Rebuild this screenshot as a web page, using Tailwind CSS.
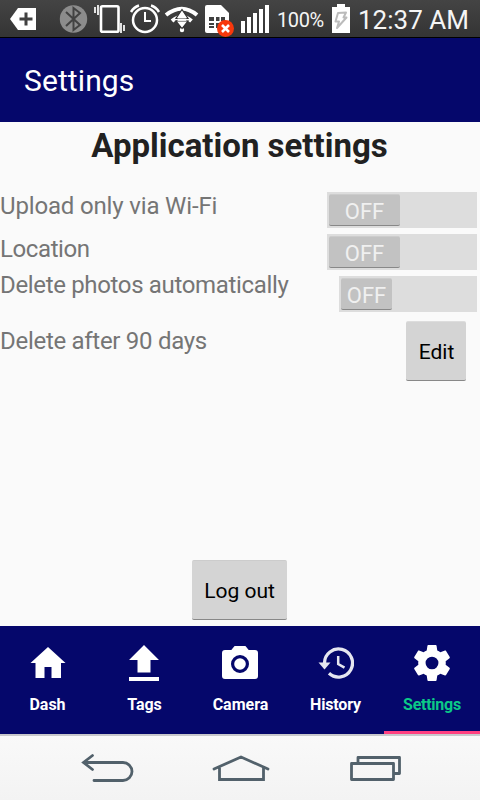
<!DOCTYPE html>
<html lang="en">
<head>
<meta charset="utf-8">
<title>Settings</title>
<script src="https://cdn.jsdelivr.net/npm/@tailwindcss/browser@4"></script>
</head>
<body class="w-[480px] h-[800px] overflow-hidden bg-[#fafafa] font-['Roboto',sans-serif] flex flex-col whitespace-nowrap">
<div class="h-[38px] shrink-0 bg-linear-to-b from-[#444] to-[#343434] border-b border-black flex text-[#f5f5f5]">
<svg class="w-[272px] h-[37px] shrink-0" viewBox="0 0 272 37" fill="none">
<path d="M10 19L18 8H36V30H18Z" fill="#fff"/><path d="M19.500 19H32.500M26 12.500V25.500" stroke="#414141" stroke-width="3"/>
<circle cx="73.500" cy="19" r="13.700" fill="#8c8c8c"/><path d="M66 12L80 25L73.500 30V8L80 13L66 26" stroke="#424242" stroke-width="2"/>
<rect x="101" y="6.200" width="17.500" height="25.500" rx="1.500" stroke="#fff" stroke-width="2.600"/><path d="M95 7V13M98 5V15M121 23V33M124 25V31" stroke="#fff" stroke-width="1.700"/>
<circle cx="145" cy="20" r="12" stroke="#fff" stroke-width="2.500"/><path d="M145 12V21H151" stroke="#fff" stroke-width="2"/><path d="M131 12Q134 7 139 5.500M159 12Q156 7 151 5.500" stroke="#fff" stroke-width="2.500"/>
<path d="M166 15Q182 2.500 197 15M172 21Q182 12.500 191.500 21" stroke="#fff" stroke-width="4"/><circle cx="182" cy="30" r="2.200" fill="#fff"/><path d="M182 9.500L188 18.500H176ZM182 28.500L176 21H188Z" fill="#fff" stroke="#333" stroke-width="1.200"/><path d="M177.500 19.700H186.500" stroke="#fff" stroke-width="2.400"/>
<path d="M207 5H221L229 13V31Q229 33 227 33H207Q205 33 205 31V7Q205 5 207 5Z" fill="#fff"/><path d="M209 17H214V21H209ZM216 17H219.500V21H216ZM221 17H225V21H221ZM209 23H214V25H209ZM209 26H214V28H209ZM216 23H225V28H216Z" fill="#414141"/><circle cx="225.500" cy="28.500" r="8.500" fill="#f8380c"/><path d="M222 25L229 32M229 25L222 32" stroke="#fff" stroke-width="2.600"/>
<path d="M241 21H245V33H241ZM247 17H251V33H247ZM253 13H257V33H253ZM259 9H263V33H259ZM265 5H269V33H265Z" fill="#fff"/>
</svg>
<span class="w-[59px] pl-[5px] pt-[8px] text-[20px] leading-6 tracking-[-0.4px]">100%</span>
<svg class="w-[20px] h-[37px] shrink-0" viewBox="0 0 20 37"><path d="M6 4H14V7H19V33H1V7H6Z" fill="#fff"/><path d="M7 13L15 12.500L12.500 17.500H15.500L6 28L8 21.500H4.500Z" fill="none" stroke="#bbb" stroke-width="2" stroke-linejoin="round"/></svg>
<span class="pl-[7px] pt-[4px] text-[26px] leading-8">12:37 AM</span>
</div>
<header class="h-[84px] shrink-0 bg-[#05076b] pl-6 pt-[2px] flex items-center text-white text-[30px] leading-9 tracking-[0.1px]">Settings</header>
<main class="h-[504px] shrink-0 flex flex-col text-[24px] leading-7 text-[#757575]">
<h1 class="h-[70px] pt-[4px] pr-px text-center text-[33px] leading-[40px] font-bold text-[#212121]">Application settings</h1>
<div class="h-[42px] flex justify-between pr-[3px]"><span class="tracking-[-0.16px]">Upload only via Wi-Fi</span>
<div class="w-[150px] h-9 bg-[#ddd] pl-[2px] pt-[2px]"><div class="w-[71px] h-[32px] rounded-[2px] bg-[#c2c2c2] border-t border-b border-t-[#ccc] border-b-[#888] text-[#f0f0f0] text-[22px] leading-[34px] text-center">OFF</div></div></div>
<div class="h-[42px] flex justify-between pr-[3px]"><span class="pt-px tracking-[-0.4px]">Location</span>
<div class="w-[150px] h-9 bg-[#ddd] pl-[2px] pt-[2px]"><div class="w-[71px] h-[32px] rounded-[2px] bg-[#c2c2c2] border-t border-b border-t-[#ccc] border-b-[#888] text-[#f0f0f0] text-[22px] leading-[34px] text-center">OFF</div></div></div>
<div class="h-[45px] flex justify-between pr-[3px]"><span class="-mt-[5px] tracking-[-0.34px]">Delete photos automatically</span>
<div class="w-[138px] h-9 bg-[#ddd] pl-[2px] pt-[2px]"><div class="w-[51px] h-[32px] rounded-[2px] bg-[#c2c2c2] border-t border-b border-t-[#ccc] border-b-[#888] text-[#f0f0f0] text-[22px] leading-[34px] text-center">OFF</div></div></div>
<div class="flex justify-between pr-[14px]"><span class="pt-[6px] tracking-[-0.29px]">Delete after 90 days</span>
<button class="w-[60px] h-[60px] pt-[2px] pl-px rounded-[2px] bg-[#d4d4d4] border-t border-b border-t-[#ddd] border-b-[#888] text-black text-[21px]">Edit</button></div>
<button class="mt-auto mb-[6px] ml-[192px] w-[95px] h-[60px] pt-[2px] rounded-[2px] bg-[#d4d4d4] border-t border-b border-t-[#ccc] border-b-[#888] text-black text-[21px]">Log out</button>
</main>
<nav class="h-[108px] shrink-0 bg-[#05076b] grid grid-cols-5 text-white text-[16px] leading-5 font-bold text-center">
<div class="flex flex-col items-center pt-[19px]"><svg class="w-9 h-9" viewBox="0 0 36 36" fill="#fff"><path d="M18 2L35.500 18H31V33H21.500V22H14.500V33H5.500V18H.5Z"/></svg><span class="mt-[14px] -ml-px">Dash</span></div>
<div class="flex flex-col items-center pt-[19px]"><svg class="w-9 h-9" viewBox="0 0 36 36" fill="#fff"><path d="M18 0L33 15H24.500V27.500H11.500V15H3ZM3 32H33V36H3Z"/></svg><span class="mt-[14px] ml-px">Tags</span></div>
<div class="flex flex-col items-center pt-[19px]"><svg class="w-9 h-9" viewBox="0 0 36 36" fill="#fff"><path fill-rule="evenodd" d="M12.600 1H23.400L26.700 5H33Q36 5 36 8V31Q36 34 33 34H3Q0 34 0 31V8Q0 5 3 5H9.300ZM18 10A9 9 0 1 0 18 28A9 9 0 1 0 18 10Z"/><circle cx="18" cy="19" r="5.800"/></svg><span class="mt-[14px] ml-px">Camera</span></div>
<div class="flex flex-col items-center pt-[19px]"><svg class="w-9 h-9" viewBox="0 0 36 36" fill="none" stroke="#e6e6f0"><path d="M6.500 18A14 14 0 1 1 11 28.300" stroke-width="3.300"/><path d="M.5 17.500H12.500L6.500 24.500Z" fill="#e6e6f0" stroke="none"/><path d="M20.200 11V19L26.500 22.700" stroke-width="2.500"/></svg><span class="mt-[14px] -ml-px tracking-[-0.15px]">History</span></div>
<div class="flex flex-col items-center pt-[19px] border-b-[3px] border-[#ff4081]"><svg class="w-[36px] h-9" viewBox="2.200 2 19.600 20" preserveAspectRatio="none" fill="#fff"><path d="M19.430 12.980c.04-.32.07-.64.07-.98s-.03-.66-.07-.98l2.110-1.650c.19-.15.24-.42.12-.64l-2-3.460c-.12-.22-.39-.3-.61-.22l-2.490 1c-.52-.4-1.080-.73-1.690-.98l-.38-2.650C14.460 2.180 14.250 2 14 2h-4c-.25 0-.46.18-.49.42l-.38 2.650c-.61.25-1.170.59-1.690.98l-2.490-1c-.23-.09-.49 0-.61.22l-2 3.460c-.13.22-.07.49.12.64l2.110 1.650c-.04.32-.07.65-.07.98s.03.66.07.98l-2.110 1.650c-.19.15-.24.42-.12.64l2 3.460c.12.22.39.3.61.22l2.490-1c.52.4 1.080.73 1.690.98l.38 2.650c.03.24.24.42.49.42h4c.25 0 .46-.18.49-.42l.38-2.650c.61-.25 1.170-.59 1.690-.98l2.490 1c.23.09.49 0 .61-.22l2-3.460c.12-.22.07-.49-.12-.64zM12 15.500a3.500 3.500 0 1 1 0-7 3.500 3.500 0 0 1 0 7"/></svg><span class="mt-[14px] tracking-[-0.25px] text-[#0bc987]">Settings</span></div>
</nav>
<footer class="h-[66px] shrink-0 border-t-2 border-[#c8c8cc] bg-linear-to-b from-[#f9f9f9] to-[#f3f3f3]">
<svg class="w-[480px] h-16" viewBox="0 736 480 64" fill="none" stroke="#52616b" stroke-width="2.800" stroke-linecap="round"><path d="M92.500 755.500L83.500 762.500L92.500 769.500M84 762.500H123A9 9 0 0 1 123 780.500H94"/><path d="M214 769L241 757L268 769M219.500 768V779.500H263.500V768" stroke-linejoin="miter"/><path d="M351.500 763.500H393.500V779.500H351.500ZM358 762V757.500H399.500V773.500H395" stroke-linejoin="round"/></svg>
</footer>
</body>
</html>
